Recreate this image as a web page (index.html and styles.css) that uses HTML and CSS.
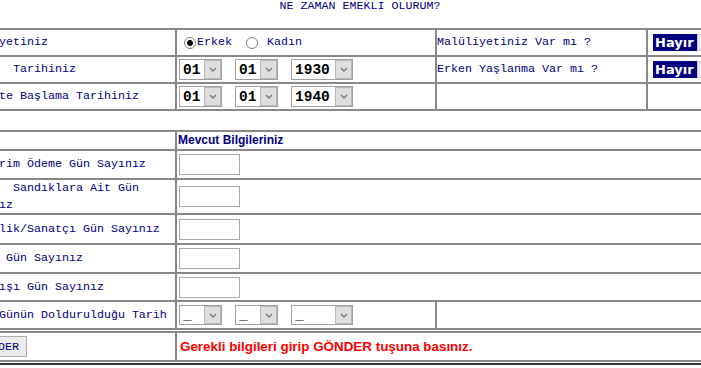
FILE: index.html
```html
<!DOCTYPE html>
<html lang="tr">
<head>
    <meta charset="UTF-8">
    <meta name="viewport" content="width=device-width, initial-scale=1.0">
    <title>Ne Zaman Emekli Olurum?</title>
    <link rel="stylesheet" href="styles.css">
</head>
<body>
<div class="page">
    <h1 class="page-title">NE ZAMAN EMEKLI OLURUM?</h1>

    <div class="grid grid-top">
        <div class="cell label">Cinsiyetiniz</div>
        <div class="cell">
            <label class="radio"><input type="radio" name="cinsiyet" value="E" checked>Erkek</label>
            <label class="radio radio-second"><input type="radio" name="cinsiyet" value="K">Kadın</label>
        </div>
        <div class="cell label label-right">Malüliyetiniz Var mı ?</div>
        <div class="cell">
            <span class="dd dd-navy"><select id="malul"><option>Hayır</option><option>Evet</option></select><span class="dd-btn"></span></span>
        </div>

        <div class="cell label">Doğum&nbsp; Tarihiniz</div>
        <div class="cell dates">
            <span class="dd dd-2"><select id="dogum-gun"><option>01</option></select><span class="dd-btn"><svg width="8" height="5" viewBox="0 0 8 5"><path d="M1 1 L4 4 L7 1" fill="none" stroke="#777" stroke-width="1.4"/></svg></span></span>
            <span class="dd dd-2"><select id="dogum-ay"><option>01</option></select><span class="dd-btn"><svg width="8" height="5" viewBox="0 0 8 5"><path d="M1 1 L4 4 L7 1" fill="none" stroke="#777" stroke-width="1.4"/></svg></span></span>
            <span class="dd dd-4"><select id="dogum-yil"><option>1930</option></select><span class="dd-btn"><svg width="8" height="5" viewBox="0 0 8 5"><path d="M1 1 L4 4 L7 1" fill="none" stroke="#777" stroke-width="1.4"/></svg></span></span>
        </div>
        <div class="cell label label-right">Erken Yaşlanma Var mı ?</div>
        <div class="cell">
            <span class="dd dd-navy"><select id="erken"><option>Hayır</option><option>Evet</option></select><span class="dd-btn"></span></span>
        </div>

        <div class="cell label">Bu İşte Başlama Tarihiniz</div>
        <div class="cell dates">
            <span class="dd dd-2"><select id="giris-gun"><option>01</option></select><span class="dd-btn"><svg width="8" height="5" viewBox="0 0 8 5"><path d="M1 1 L4 4 L7 1" fill="none" stroke="#777" stroke-width="1.4"/></svg></span></span>
            <span class="dd dd-2"><select id="giris-ay"><option>01</option></select><span class="dd-btn"><svg width="8" height="5" viewBox="0 0 8 5"><path d="M1 1 L4 4 L7 1" fill="none" stroke="#777" stroke-width="1.4"/></svg></span></span>
            <span class="dd dd-4"><select id="giris-yil"><option>1940</option></select><span class="dd-btn"><svg width="8" height="5" viewBox="0 0 8 5"><path d="M1 1 L4 4 L7 1" fill="none" stroke="#777" stroke-width="1.4"/></svg></span></span>
        </div>
        <div class="cell"></div>
        <div class="cell"></div>
    </div>

    <div class="grid grid-info">
        <div class="cell"></div>
        <div class="cell wide heading">Mevcut Bilgileriniz</div>

        <div class="cell label">SSK Prim Ödeme Gün Sayınız</div>
        <div class="cell wide"><input type="text" class="field" id="ssk-gun"></div>

        <div class="cell label">Diğer&nbsp; Sandıklara Ait Gün Sayınız</div>
        <div class="cell wide"><input type="text" class="field" id="sandik-gun"></div>

        <div class="cell label">Tacirlik/Sanatçı Gün Sayınız</div>
        <div class="cell wide"><input type="text" class="field" id="bagkur-gun"></div>

        <div class="cell label">Memur Gün Sayınız</div>
        <div class="cell wide"><input type="text" class="field" id="memur-gun"></div>

        <div class="cell label">Yurtdışı Gün Sayınız</div>
        <div class="cell wide"><input type="text" class="field" id="yurtdisi-gun"></div>

        <div class="cell label">3600 Günün Doldurulduğu Tarih</div>
        <div class="cell dates">
            <span class="dd dd-2 dd-low"><select id="dolum-gun"><option>_</option></select><span class="dd-btn"><svg width="8" height="5" viewBox="0 0 8 5"><path d="M1 1 L4 4 L7 1" fill="none" stroke="#777" stroke-width="1.4"/></svg></span></span>
            <span class="dd dd-2 dd-low"><select id="dolum-ay"><option>_</option></select><span class="dd-btn"><svg width="8" height="5" viewBox="0 0 8 5"><path d="M1 1 L4 4 L7 1" fill="none" stroke="#777" stroke-width="1.4"/></svg></span></span>
            <span class="dd dd-4 dd-low"><select id="dolum-yil"><option>_</option></select><span class="dd-btn"><svg width="8" height="5" viewBox="0 0 8 5"><path d="M1 1 L4 4 L7 1" fill="none" stroke="#777" stroke-width="1.4"/></svg></span></span>
        </div>
        <div class="cell"></div>
    </div>

    <div class="grid grid-send">
        <div class="cell"><button class="btn-send" id="gonder">GÖNDER</button></div>
        <div class="cell message">Gerekli bilgileri girip GÖNDER tuşuna basınız.</div>
    </div>

    <div class="footer-line"></div>
</div>
</body>
</html>
```

FILE: styles.css
```css
body {
    margin: 0;
    background-color: #fff;
    overflow: hidden;
    font-family: "Liberation Mono", "Courier New", monospace;
    font-size: 11.67px;
    color: #000080;
}

.page {
    width: 800px;
    margin-left: -40px;
}

.page-title {
    margin: 0 0 16px;
    font-size: 11.67px;
    font-weight: normal;
    line-height: 12px;
    text-align: center;
}

.grid {
    display: grid;
    border-top: 2px solid #888;
    border-left: 2px solid #888;
}

.grid-top {
    grid-template-columns: 215px 260px 211px 1fr;
    grid-auto-rows: 27px;
}

.grid-info {
    margin-top: 19px;
    grid-template-columns: 215px 260px 1fr;
    grid-template-rows: 19px 29px 35px 30px 29px 28px 28px;
}

.grid-send {
    margin-top: 1px;
    grid-template-columns: 215px 1fr;
    grid-auto-rows: 29px;
}

.cell {
    display: flex;
    align-items: center;
    padding: 0 2px;
    border-right: 2px solid #888;
    border-bottom: 2px solid #888;
    line-height: 17px;
}

.cell.wide {
    grid-column: span 2;
}

.label-right {
    padding-left: 0;
}

.heading {
    padding-left: 1px;
    font-family: "Liberation Sans", Arial, sans-serif;
    font-size: 12px;
    font-weight: bold;
}

.message {
    padding-left: 3px;
    font-family: "Liberation Sans", Arial, sans-serif;
    font-size: 13.4px;
    font-weight: bold;
    color: #ff0000;
}

/* radio buttons */
.radio {
    display: inline-flex;
    align-items: center;
}

.radio input {
    -webkit-appearance: none;
    appearance: none;
    width: 12px;
    height: 12px;
    margin: 0 1px 0 5px;
    border: 1px solid #808080;
    border-radius: 50%;
    background: #fff;
}

.radio input:checked {
    background: radial-gradient(circle, #000 0 2.6px, #fff 3.2px);
}

.radio-second input {
    margin: 0 9px 0 14px;
}

/* dropdowns */
.dates {
    gap: 13px;
}

.dd {
    display: inline-flex;
    box-sizing: border-box;
    height: 21px;
    border: 1px solid #a0a0a0;
    background-color: #fff;
}

.dd-low {
    height: 20px;
}

.dd-2 {
    width: 43px;
}

.dd-4 {
    width: 62px;
}

.dd select {
    -webkit-appearance: none;
    appearance: none;
    flex: 1;
    min-width: 0;
    margin: 0;
    padding: 0 0 0 3px;
    border: none;
    background: transparent;
    font-family: "Liberation Mono", "Courier New", monospace;
    font-size: 14.5px;
    font-weight: bold;
    color: #000;
    outline: none;
}

.dd-btn {
    flex: none;
    display: flex;
    align-items: center;
    justify-content: center;
    width: 15px;
    border: 1px solid #b8b8b8;
    background-color: #dedede;
}

.dd-navy {
    margin-left: 3px;
    height: 17px;
    border: none;
}

.dd-navy select {
    width: 44px;
    flex: none;
    padding-left: 2px;
    background-color: #000080;
    color: #fff;
    font-family: "DejaVu Sans", Verdana, sans-serif;
    font-size: 13px;
}

.dd-navy .dd-btn {
    width: 16px;
    background-color: #ececec;
    border-color: #c8c8c8;
}

/* text fields */
.field {
    box-sizing: border-box;
    width: 61px;
    height: 21px;
    margin: 0;
    border: 1px solid #a8a8a8;
    background-color: #fff;
}

.btn-send {
    height: 21px;
    margin-left: 5px;
    padding: 0 7px;
    border: 1px solid #adadad;
    background-color: #ececec;
    font-family: "Liberation Mono", "Courier New", monospace;
    font-size: 11.67px;
    color: #000080;
}

.footer-line {
    margin-top: 1px;
    border-top: 2px solid #333;
}
```
